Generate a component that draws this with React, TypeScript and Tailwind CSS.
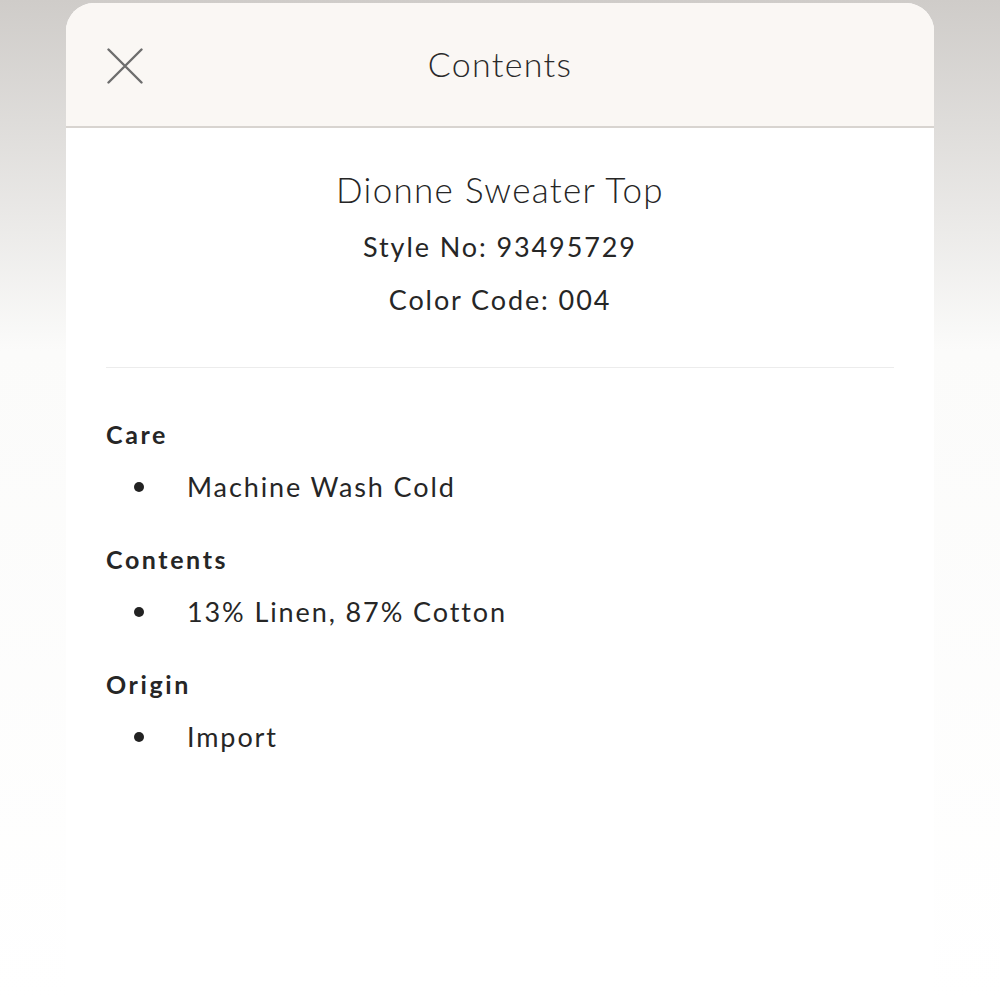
const sections = [
  { title: 'Care', items: ['Machine Wash Cold'] },
  { title: 'Contents', items: ['13% Linen, 87% Cotton'] },
  { title: 'Origin', items: ['Import'] },
];

export default function App() {
  return (
    <div
      className="min-h-screen w-full flex justify-center pt-[3px] bg-gradient-to-b from-[#cfccc9] via-[#fbfbfa] via-35% to-white"
      style={{ fontFamily: 'Lato, "Open Sans", sans-serif' }}
    >
      <div className="w-[868px] flex flex-col min-h-[997px] bg-white rounded-t-[28px]">
        <header className="h-[125px] rounded-t-[28px] bg-[#faf7f4] border-b-2 border-[#d8d4d0] flex items-center relative">
          <button className="absolute left-[41px] top-[45px] w-[36px] h-[36px] text-[#6d6d6d]">
            <svg viewBox="0 0 36 36" width="36" height="36" fill="none" stroke="currentColor" strokeWidth="2.4" strokeLinecap="round">
              <path d="M1.5 1.5L34.5 34.5M34.5 1.5L1.5 34.5" />
            </svg>
          </button>
          <h1 className="w-full text-center text-[34px] font-light text-[#2a2a2a] tracking-[1.3px] -mt-[2px]">
            Contents
          </h1>
        </header>

        <div className="px-10 flex-1">
          <div className="text-center pt-[39px] pb-[47px] border-b border-[#ececec] text-[#262626]">
            <div className="text-[35px] font-light leading-[44px] tracking-[1.3px]">Dionne Sweater Top</div>
            <div className="text-[27px] leading-[40px] mt-[16px] tracking-[1.9px]">Style No: 93495729</div>
            <div className="text-[27px] leading-[40px] mt-[13px] tracking-[1.9px]">Color Code: 004</div>
          </div>

          <div className="pt-[48px] flex flex-col gap-[35px] text-[#262626]">
            {sections.map((s) => (
              <section key={s.title}>
                <h2 className="text-[25px] font-bold leading-[36px] tracking-[2.6px]">{s.title}</h2>
                <ul className="mt-[16px]">
                  {s.items.map((it) => (
                    <li key={it} className="flex items-center text-[27px] leading-[38px] tracking-[1.9px]">
                      <span className="w-[10px] h-[10px] rounded-full bg-[#222] ml-[28px] mr-[43px]" />
                      {it}
                    </li>
                  ))}
                </ul>
              </section>
            ))}
          </div>
        </div>
      </div>
    </div>
  );
}
